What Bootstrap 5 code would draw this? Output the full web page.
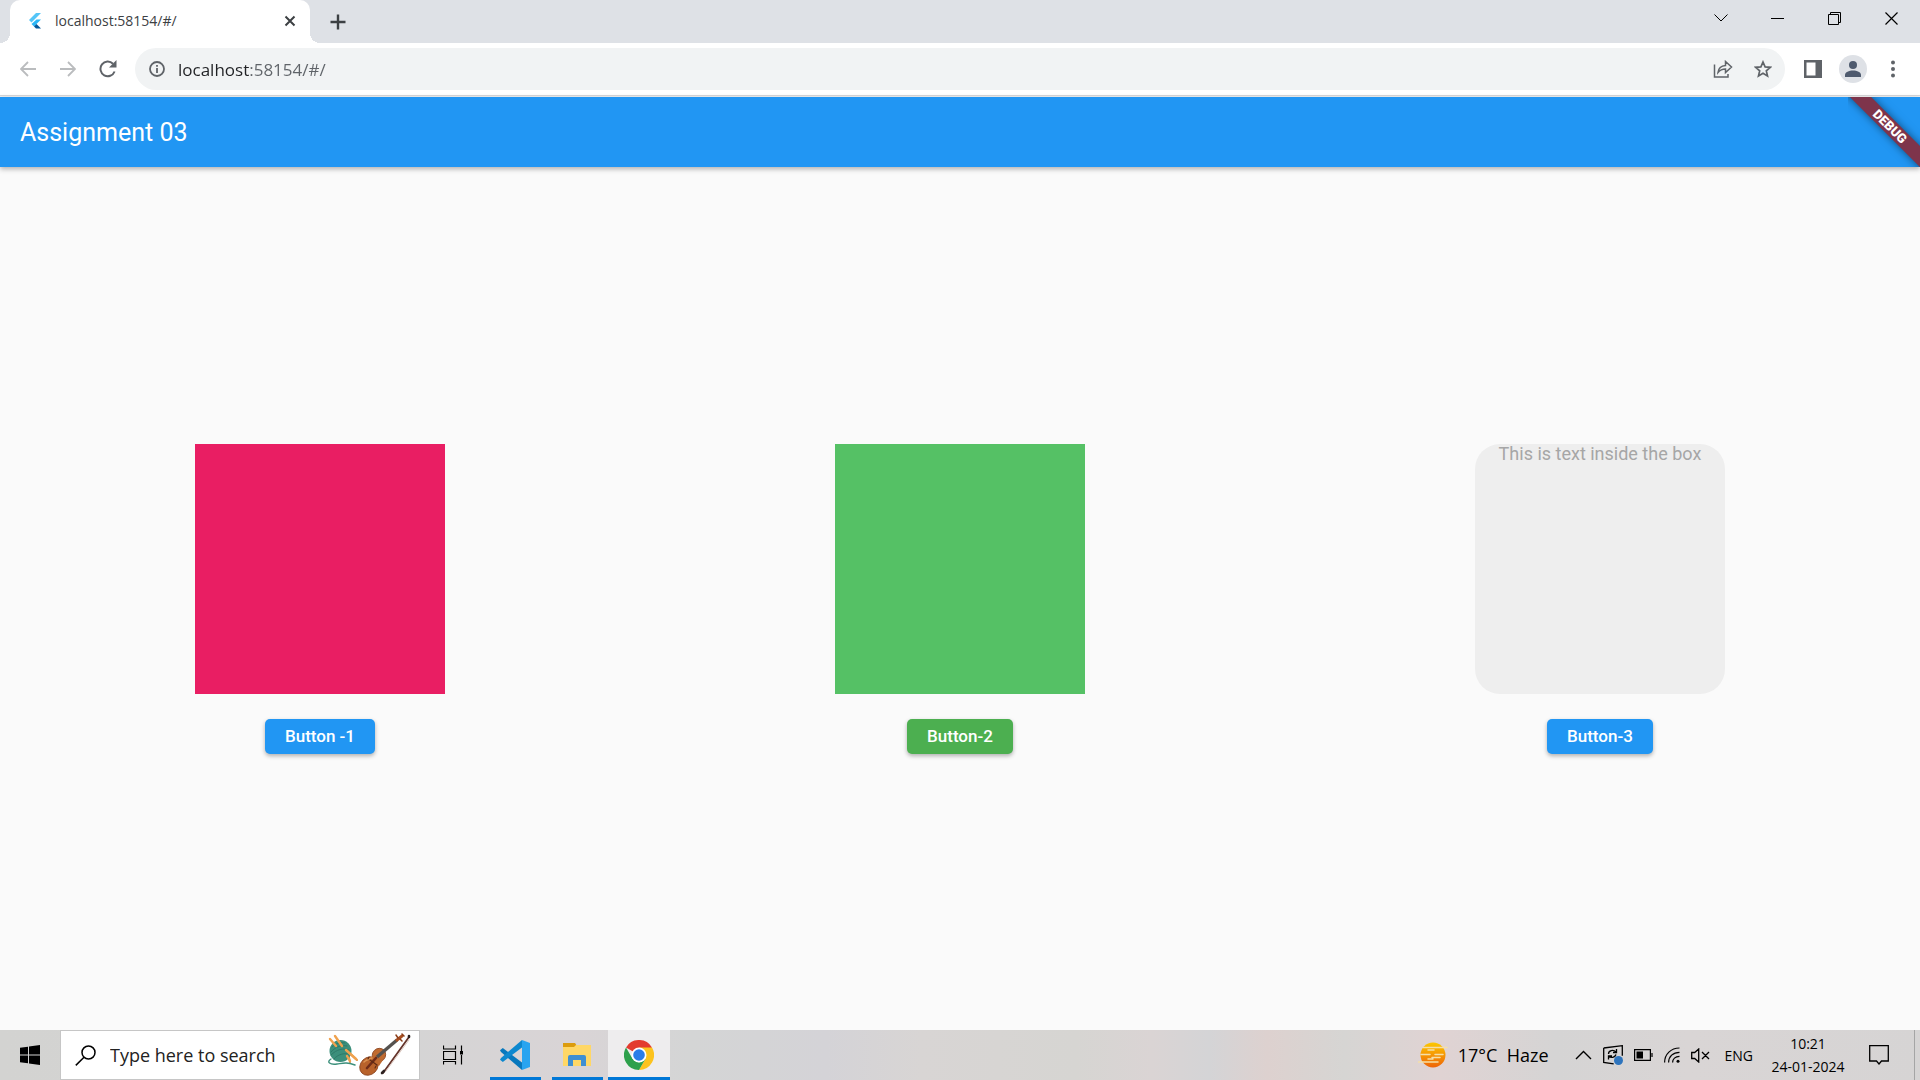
<!DOCTYPE html>
<html lang="en">
<head>
<meta charset="utf-8">
<meta name="viewport" content="width=device-width, initial-scale=1">
<title>localhost:58154/#/</title>
<link href="https://cdn.jsdelivr.net/npm/bootstrap@5.3.0/dist/css/bootstrap.min.css" rel="stylesheet">
<style>
  :root { --ui: "Open Sans", "Noto Sans", sans-serif; --blue: #2196f3; }
  body { font-family: var(--ui); color: #000; background: #fafafa; overflow: hidden; }
  svg { display: block; flex: none; }
  .flat { border: 0; background: none; padding: 0; display: flex; align-items: center; justify-content: center; flex: none; color: #5f6368; }

  /* browser chrome */
  .tab-strip { background: #dee1e6; height: 43px; padding-left: 10px; }
  .page-tab { position: relative; width: 300px; background: #fff; border-radius: 10px 10px 0 0; padding: 0 10px 2px 16px; font-size: 14px; color: #3c4043; }
  .page-tab::before, .page-tab::after { content: ""; position: absolute; bottom: 0; width: 10px; height: 10px; }
  .page-tab::before { left: -10px; background: radial-gradient(circle at 0 0, transparent 10px, #fff 10px); }
  .page-tab::after { right: -10px; background: radial-gradient(circle at 100% 0, transparent 10px, #fff 10px); }
  .tab-title { color: inherit; text-decoration: none; margin-left: 11px; }
  .tab-btn { width: 20px; height: 20px; color: #3c4043; }
  .new-tab { margin-left: 18px; }
  .win-btn { width: 57px; height: 36px; color: #000; }
  .tool-row { background: #fff; height: 54px; padding: 5px 7px 6px 8px; border-bottom: 1px solid #f1f1f1; box-shadow: inset 0 -1px #d5d7da; }
  .tool-btn { width: 40px; height: 42px; }
  .address { background: #f1f3f4; border-radius: 21px; height: 42px; margin: 0 8px 0 7px; padding: 0 2px 0 14px; }
  .address input { border: 0; outline: 0; padding: 0; margin-left: 13px; font-size: 17px; height: 30px; color: #202124; background: linear-gradient(90deg, #202124 71px, #5f6368 71px); -webkit-background-clip: text; background-clip: text; -webkit-text-fill-color: transparent; }

  /* app */
  .app-bar { position: relative; z-index: 1; background: var(--blue); height: 70px; padding: 2px 20px 0; box-shadow: 0 2px 5px rgba(0,0,0,.3); }
  .app-bar h1 { font: 400 25px/30px Roboto, sans-serif; color: #fff; margin: 0; }
  .debug-corner { position: absolute; right: 0; top: 0; width: 72px; height: 70px; overflow: hidden; }
  .debug-band { position: absolute; left: -18px; top: 22px; width: 120px; height: 15px; transform: rotate(45deg); background: #7e344b; color: #fff; font: 900 13px/15px Roboto, sans-serif; text-align: center; box-shadow: 0 0 8px rgba(0,0,0,.5); }
  .app-body { font-family: Roboto, sans-serif; }
  .tile { width: 250px; height: 250px; margin-bottom: 25px; font-size: 18px; line-height: 20px; text-align: center; color: #a6a6a6; }
  .tile-pink { background: #e91e63; }
  .tile-green { background: #55c165; }
  .tile-grey { background: #eee; border-radius: 25px; }
  .btn-app { --bs-btn-color: #fff; --bs-btn-hover-color: #fff; --bs-btn-bg: var(--blue); --bs-btn-hover-bg: #1e88e5; border: 0; border-radius: 5px; padding: 0 20px; height: 35px; font-size: 17px; font-weight: 500; line-height: 35px; box-shadow: 0 2px 4px rgba(0,0,0,.3); }
  .btn-app-green { --bs-btn-bg: #4caf50; --bs-btn-hover-bg: #43a047; }

  /* taskbar */
  .task-bar { height: 50px; background: linear-gradient(90deg, #d3d3d1 0, #d4d4d4 20%, #d9d4d6 30%, #d4d5d5 36%, #d4d3d7 43%, #d8d5d4 48%, #d6d5d2 56%, #dad4d4 60%, #d4d4d6 63%, #ddd1cf 66%, #d6d5d3 70%, #e0d3d3 75%, #d5d4d4 81%, #d9d5d5 88%, #d6d4d4 100%); }
  .start-btn { width: 60px; color: #000; }
  .search-box { width: 360px; height: 50px; background: #fff; border: 1px solid #c6c6c6; padding: 0 7px 0 14px; margin-right: 2px; }
  .search-box input { flex: 1; min-width: 0; border: 0; outline: 0; padding: 0; margin-left: 14px; font-size: 18px; }
  .search-box input::placeholder { color: #222; opacity: 1; }
  .task-btn { width: 62px; color: #000; }
  .running { background: linear-gradient(#0078d7, #0078d7) center bottom / 51px 3px no-repeat; }
  .current { background: linear-gradient(#0078d7, #0078d7) center bottom / 62px 3px no-repeat #eeedee; }
  .tray { color: #000; }
  .weather { font-size: 18px; color: #000; gap: 10px; margin-right: 26px; }
  .tray-icons { gap: 11px; margin-right: 15px; }
  .tray-icons .flat, .lang, .clock, .notify { color: #000; }
  .lang { font-size: 14px; margin-right: 16px; }
  .clock { flex-direction: column; font-size: 14px; line-height: 23px; width: 78px; margin-right: 22px; }
  .notify { margin-right: 25px; }
  .peek { width: 6px; border-left: 1px solid #a5a5a5; }
</style>
<script src="https://cdn.jsdelivr.net/npm/bootstrap@5.3.0/dist/js/bootstrap.bundle.min.js"></script>
</head>
<body class="vh-100 d-flex flex-column">

<header>
  <div class="tab-strip d-flex align-items-stretch">
    <div class="page-tab d-flex align-items-center">
      <svg width="18" height="18" viewBox="0 0 18 18"><path d="M10 1h5L5.500 10.500 3 8z" fill="#54c5f8"/><path d="M10.500 7.500H15L10.500 12 8 14.500 5.500 12z" fill="#29b6f6"/><path d="M8 14.500L10.500 12l4.500 4.500h-5z" fill="#01579b"/></svg>
      <a class="tab-title me-auto" href="#/">localhost:58154/#/</a>
      <button class="flat tab-btn" aria-label="Close tab"><svg width="12" height="12" viewBox="0 0 12 12" stroke="currentColor" stroke-width="2"><path d="M1.500 1.500l9 9M10.500 1.500l-9 9"/></svg></button>
    </div>
    <button class="flat tab-btn new-tab align-self-center" aria-label="New tab"><svg width="16" height="16" viewBox="0 0 16 16" stroke="currentColor" stroke-width="2.400"><path d="M8 .5v15M.5 8h15"/></svg></button>
    <div class="d-flex ms-auto">
      <button class="flat win-btn" aria-label="Search tabs"><svg width="14" height="8" viewBox="0 0 14 8" fill="none" stroke="currentColor"><path d="M.5 .5L7 7l6.500-6.500"/></svg></button>
      <button class="flat win-btn" aria-label="Minimize"><svg width="13" height="13" viewBox="0 0 13 13" fill="none" stroke="currentColor"><path d="M0 6.500h13"/></svg></button>
      <button class="flat win-btn" aria-label="Restore"><svg width="13" height="13" viewBox="0 0 13 13" fill="none" stroke="currentColor"><path d="M.5 2.500h10v10H.5zM2.500 2.500v-2h10v10h-2"/></svg></button>
      <button class="flat win-btn" aria-label="Close"><svg width="13" height="13" viewBox="0 0 13 13" fill="none" stroke="currentColor" stroke-width="1.200"><path d="M.5 .5l12 12M12.500 .5l-12 12"/></svg></button>
    </div>
  </div>

  <div class="tool-row d-flex align-items-center">
    <button class="flat tool-btn" aria-label="Back" disabled><svg width="16" height="16" viewBox="0 0 16 16" fill="none" stroke="#babcbe" stroke-width="1.800"><path d="M16 8H1.500M8 1L1 8l7 7"/></svg></button>
    <button class="flat tool-btn" aria-label="Forward" disabled><svg width="16" height="16" viewBox="0 0 16 16" fill="none" stroke="#babcbe" stroke-width="1.800"><path d="M0 8h14.500M8 1l7 7-7 7"/></svg></button>
    <button class="flat tool-btn" aria-label="Reload"><svg width="18" height="18" viewBox="0 0 18 18"><path d="M15.600 11.500A7.300 7.300 0 1 1 14 3.800" fill="none" stroke="currentColor" stroke-width="2"/><path d="M17.500 0v7.500H10z" fill="currentColor"/></svg></button>
    <div class="address d-flex align-items-center flex-fill">
      <svg width="16" height="16" viewBox="0 0 16 16" fill="none" stroke="#5f6368" stroke-width="1.800"><circle cx="8" cy="8" r="7"/><path d="M8 7v5M8 4v1.800"/></svg>
      <input class="flex-fill" type="text" aria-label="Address" value="localhost:58154/#/">
      <button class="flat tool-btn" aria-label="Share"><svg width="20" height="18" viewBox="0 0 20 18" fill="none" stroke="currentColor" stroke-width="1.500"><path d="M1.500 4.500v12.500h13.500v-3"/><path d="M5 12.500C5.500 8 8 5.800 12.500 5.500V1.500L18.500 7l-6 5.500V9C9 9 7 10 5 12.500z"/></svg></button>
      <button class="flat tool-btn" aria-label="Bookmark"><svg width="18" height="18" viewBox="0 0 18 18" fill="none" stroke="currentColor" stroke-width="1.700"><path d="M9 2l2.100 4.900 5.200.4-4 3.500 1.200 5.100L9 13.200l-4.500 2.700 1.200-5.100-4-3.500 5.200-.4z"/></svg></button>
    </div>
    <button class="flat tool-btn" aria-label="Side panel"><svg width="18" height="18" viewBox="0 0 18 18"><path d="M0 0h18v18H0z" fill="#5f6368"/><path d="M2.500 2.500h9v13h-9z" fill="#fff"/></svg></button>
    <button class="flat tool-btn" aria-label="Profile"><svg width="28" height="28" viewBox="0 0 28 28"><circle cx="14" cy="14" r="14" fill="#dee1e6"/><circle cx="14" cy="10" r="4" fill="#4e5a6e"/><path d="M6 22v-2c0-3 4-4.500 8-4.500s8 1.500 8 4.500v2z" fill="#4e5a6e"/></svg></button>
    <button class="flat tool-btn" aria-label="Menu"><svg width="4" height="18" viewBox="0 0 4 18" fill="currentColor"><circle cx="2" cy="2.500" r="2"/><circle cx="2" cy="9" r="2"/><circle cx="2" cy="15.500" r="2"/></svg></button>
  </div>
</header>

<div class="app-bar d-flex align-items-center">
  <h1>Assignment 03</h1>
  <div class="debug-corner"><div class="debug-band">DEBUG</div></div>
</div>

<main class="app-body container-fluid p-0 flex-fill d-flex">
  <div class="row g-0 w-100 align-items-center">
    <div class="col-4 d-flex flex-column align-items-center"><div class="tile tile-pink"></div><button class="btn btn-app">Button -1</button></div>
    <div class="col-4 d-flex flex-column align-items-center"><div class="tile tile-green"></div><button class="btn btn-app btn-app-green">Button-2</button></div>
    <div class="col-4 d-flex flex-column align-items-center"><div class="tile tile-grey">This is text inside the box</div><button class="btn btn-app">Button-3</button></div>
  </div>
</main>

<footer class="task-bar d-flex align-items-stretch">
  <button class="flat start-btn" aria-label="Start"><svg width="20" height="20" viewBox="0 0 20 20"><path d="M0 2.800L8 1.700V9.500H0zM9 1.500L20 0v9.500H9zM0 10.500h8v7.800L0 17.200zM9 10.500h11V20L9 18.500z"/></svg></button>
  <div class="search-box d-flex align-items-center">
    <svg width="21" height="21" viewBox="0 0 21 21" fill="none" stroke="#000" stroke-width="1.500"><circle cx="13.500" cy="7.500" r="6.500"/><path d="M9 12.200L.8 20.400"/></svg>
    <input type="text" aria-label="Search" placeholder="Type here to search">
    <svg width="86" height="44" viewBox="0 0 86 44" fill="none" stroke-linecap="round">
      <path d="M22 20l2 9M18 15l13 12" stroke="#e08f3c" stroke-width="2"/>
      <circle cx="14.500" cy="18" r="11" fill="#3b8f7b"/>
      <path d="M6 14c4-4 9-5 13-4M5 19c5-6 11-7 16-6M5 22c6-6 12-7 18-5M8 26c4-5 10-6 15-5" stroke="#2c7767" stroke-width=".9"/>
      <path d="M4 6l6 7M9 3l7 10M20 17l10 9M21 23l3 5" stroke="#f0a24e" stroke-width="2.400"/>
      <path d="M5 26c-5 3-1 6 6 5s9-2 18 1" stroke="#3b8f7b" stroke-width="1.400"/>
      <ellipse cx="43" cy="33" rx="10" ry="8.500" transform="rotate(-45 43 33)" fill="#b8622b" stroke="#86401c" stroke-width=".8"/>
      <ellipse cx="53" cy="22" rx="7" ry="6.500" transform="rotate(-45 53 22)" fill="#c06c31" stroke="#86401c" stroke-width=".8"/>
      <path d="M43 25l6-3 8 5-4 6z" fill="#bd6930"/>
      <path d="M38 29c2-2 5-3 8-4" stroke="#dc9352" stroke-width="1.600"/>
      <path d="M41 35l9-10" stroke="#6f2c18" stroke-width="2.600"/>
      <path d="M51 24L71 7" stroke="#55524f" stroke-width="3.400" stroke-linecap="butt"/>
      <path d="M44 27l7 5M50 33l-1 2M43 24l-1 2" stroke="#5d2a15" stroke-width="1.100"/>
      <path d="M71 7l5-4" stroke="#a84e20" stroke-width="3"/><path d="M70 2l2 3M76 8l-2-2M76 1l2 2" stroke="#8a3d18" stroke-width="1.500"/>
      <path d="M57 40L83 4" stroke="#65342b" stroke-width="1.800"/><path d="M60 38L83 7" stroke="#d7c2b8" stroke-width=".9"/><path d="M56 40l2-2M83 3v1" stroke="#2d2221" stroke-width="2.600"/>
    </svg>
  </div>
  <button class="flat task-btn" aria-label="Task view"><svg width="20" height="20" viewBox="0 0 20 20" fill="none" stroke="currentColor" stroke-width="1.200"><path d="M.5 .5V4h12V.5M.5 6.500h12v8H.5zM.5 19.500V16.500h12v3M18.500 .5V6M18.500 10v9.500"/><path d="M17 6h3v3.500h-3z" fill="currentColor" stroke="none"/></svg></button>
  <button class="flat task-btn running" aria-label="Visual Studio Code"><svg width="30" height="30" viewBox="0 0 30 30"><path d="M0 10.200L2.800 8 22 22.500V30L1 12z" fill="#0878bd"/><path d="M0 19.800L2.800 22 22 7.500V0L1 18z" fill="#0d88cf"/><path d="M22 0l8 3v24l-8 3z" fill="#28a4f0"/></svg></button>
  <button class="flat task-btn running" aria-label="File Explorer"><svg width="28" height="24" viewBox="0 0 28 24"><path d="M0 0h12l2 3-2 3H0z" fill="#dc9c0d"/><path d="M0 4h11l2-2h15v21H0z" fill="#ffd766"/><path d="M5 23V14q0-2 2-2h14q2 0 2 2v9h-5v-6h-8v6z" fill="#3f8fd2"/></svg></button>
  <button class="flat task-btn current" aria-label="Google Chrome"><svg width="30" height="30" viewBox="0 0 30 30"><path d="M15 15L2 7.500A15 15 0 0 1 28 7.500z" fill="#e33b2e"/><path d="M15 7.500h13A15 15 0 0 1 15 30l6.500-11.200z" fill="#fcc31e"/><path d="M2 7.500l6.500 11.300L15 22.500 21.500 18.800 15 30A15 15 0 0 1 2 7.500z" fill="#2da04b"/><circle cx="15" cy="15" r="7.500" fill="#fff"/><circle cx="15" cy="15" r="5.800" fill="#2b7de9"/></svg></button>

  <div class="tray d-flex align-items-stretch ms-auto">
    <button class="flat weather"><svg width="30" height="26" viewBox="0 0 30 26"><defs><linearGradient id="sun" x1="0" y1="0" x2="0" y2="1"><stop stop-color="#fcc800"/><stop offset="1" stop-color="#ee6408"/></linearGradient></defs><circle cx="15" cy="13" r="12.500" fill="url(#sun)"/><path d="M5 5.500h24M10 8h6M3 12.500h9M17 12.500h8M14 15.500h8M0 20h20M10 17h5" stroke="#f5dfa8" stroke-width="1.500" stroke-linecap="round"/></svg><span>17°C&nbsp; Haze</span></button>
    <div class="tray-icons d-flex">
      <button class="flat" aria-label="Show hidden icons"><svg width="17" height="10" viewBox="0 0 17 10" fill="none" stroke="currentColor" stroke-width="1.400"><path d="M1 9l7.500-7.500L16 9"/></svg></button>
      <button class="flat" aria-label="Windows Update"><svg width="20" height="20" viewBox="0 0 20 20" fill="none" stroke="currentColor" stroke-width="1.300"><path d="M.7 3L19.300 .7v10M.7 3v14.500l10 1.300M5.500 9c0-4 5-4.500 7.500-2M13.500 4v3.500H10M13 9.500c-1 3-5 4-7.500 1.500M5.500 14.500V11H9"/><circle cx="15.500" cy="15.500" r="4.500" fill="#2e74bd" stroke="none"/></svg></button>
      <button class="flat" aria-label="Battery"><svg width="19" height="12" viewBox="0 0 19 12" fill="none" stroke="currentColor" stroke-width="1.200"><path d="M.6 .6h15.800v10.800H.6zM18 4v4"/><path d="M2.500 2.500h6.500v7H2.500z" fill="currentColor" stroke="none"/></svg></button>
      <button class="flat" aria-label="Wi-Fi"><svg width="16" height="16" viewBox="0 0 16 16" fill="none" stroke="currentColor" stroke-width="1.200"><path d="M.6 15.500C.6 7 7 1 15.500 1M4.600 15.500c0-6 4.500-10.200 10.900-10.200M8.600 15.500c0-3.500 2.600-6.200 6.900-6.200"/><circle cx="14" cy="14.200" r="1.500" fill="currentColor" stroke="none"/></svg></button>
      <button class="flat" aria-label="Muted"><svg width="19" height="15" viewBox="0 0 19 15" fill="none" stroke="currentColor" stroke-width="1.300"><path d="M.7 4.500h3l4-3.500v13l-4-3.500h-3zM11 4l7 7M18 4l-7 7"/></svg></button>
    </div>
    <button class="flat lang">ENG</button>
    <button class="flat clock"><span>10:21</span><span>24-01-2024</span></button>
    <button class="flat notify" aria-label="Notifications"><svg width="20" height="20" viewBox="0 0 20 20" fill="none" stroke="currentColor" stroke-width="1.300"><path d="M.7 .7h18.600v15.300h-6.800l-2.500 3-2.500-3H.7z"/></svg></button>
    <div class="peek"></div>
  </div>
</footer>
</body>
</html>
